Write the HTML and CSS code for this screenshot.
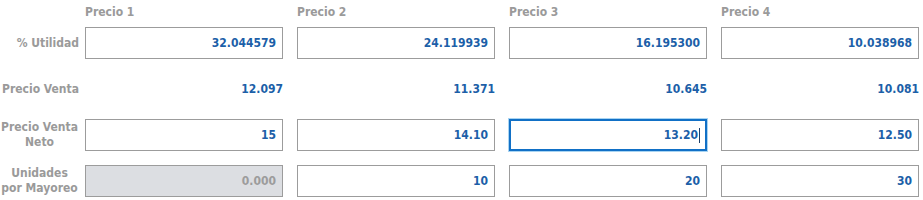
FILE: index.html
```html
<!DOCTYPE html>
<html lang="es">

<head>
  <meta charset="UTF-8" />
  <title>Precios</title>
  <link rel="stylesheet" href="styles.css">
</head>

<body>
  <div class="precios">
    <!-- encabezados -->
    <div class="fila encabezado">
      <div class="etiqueta"></div>
      <div class="celda">Precio 1</div>
      <div class="celda">Precio 2</div>
      <div class="celda">Precio 3</div>
      <div class="celda">Precio 4</div>
    </div>
    <!-- utilidad -->
    <div class="fila">
      <div class="etiqueta">% Utilidad</div>
      <div class="celda campo">32.044579</div>
      <div class="celda campo">24.119939</div>
      <div class="celda campo">16.195300</div>
      <div class="celda campo">10.038968</div>
    </div>
    <!-- precio venta -->
    <div class="fila">
      <div class="etiqueta">Precio Venta</div>
      <div class="celda valor">12.097</div>
      <div class="celda valor">11.371</div>
      <div class="celda valor">10.645</div>
      <div class="celda valor">10.081</div>
    </div>
    <!-- precio venta neto -->
    <div class="fila">
      <div class="etiqueta doble">Precio Venta<br>Neto</div>
      <div class="celda campo">15</div>
      <div class="celda campo">14.10</div>
      <div class="celda campo activo">13.20<span class="cursor"></span></div>
      <div class="celda campo">12.50</div>
    </div>
    <!-- mayoreo -->
    <div class="fila">
      <div class="etiqueta doble">Unidades<br>por Mayoreo</div>
      <div class="celda campo deshabilitado">0.000</div>
      <div class="celda campo">10</div>
      <div class="celda campo">20</div>
      <div class="celda campo">30</div>
    </div>
  </div>
</body>

</html>
```

FILE: styles.css
```css
body {
  margin: 0;
  background-color: #fff;
  font-family: "DejaVu Sans Condensed", "DejaVu Sans", sans-serif;
  font-stretch: condensed;
  font-weight: bold;
  font-size: 12px;
}

.precios {
  display: flex;
  flex-direction: column;
  gap: 14px;
}

.fila {
  display: flex;
  align-items: center;
  height: 32px;
}

.encabezado {
  height: 20px;
  margin-bottom: -7px;
  align-items: flex-end;
}

.etiqueta {
  flex-shrink: 0;
  width: 79px;
  margin-right: 6px;
  color: #9a9a9a;
  text-align: right;
  line-height: 15px;
  white-space: nowrap;
}

.etiqueta.doble {
  text-align: center;
}

.celda {
  flex-shrink: 0;
  width: 198px;
  box-sizing: border-box;
  margin-right: 14px;
  color: #1c5fa8;
}

.celda:last-child {
  margin-right: 0;
}

.encabezado .celda {
  color: #9a9a9a;
  line-height: 15px;
}

.campo {
  height: 32px;
  border: 1px solid #9c9c9c;
  padding: 0 6px;
  display: flex;
  align-items: center;
  justify-content: flex-end;
  background-color: #fff;
}

.valor {
  text-align: right;
}

.activo {
  border-color: #1170c6;
  box-shadow: 0 0 0 1px #a8d4f2, inset 0 0 0 1px #1170c6;
}

.cursor {
  display: inline-block;
  width: 1px;
  height: 15px;
  margin-left: 1px;
  background-color: #1c3f6a;
}

.deshabilitado {
  background-color: #dcdee2;
  color: #9c9c9c;
}
```
